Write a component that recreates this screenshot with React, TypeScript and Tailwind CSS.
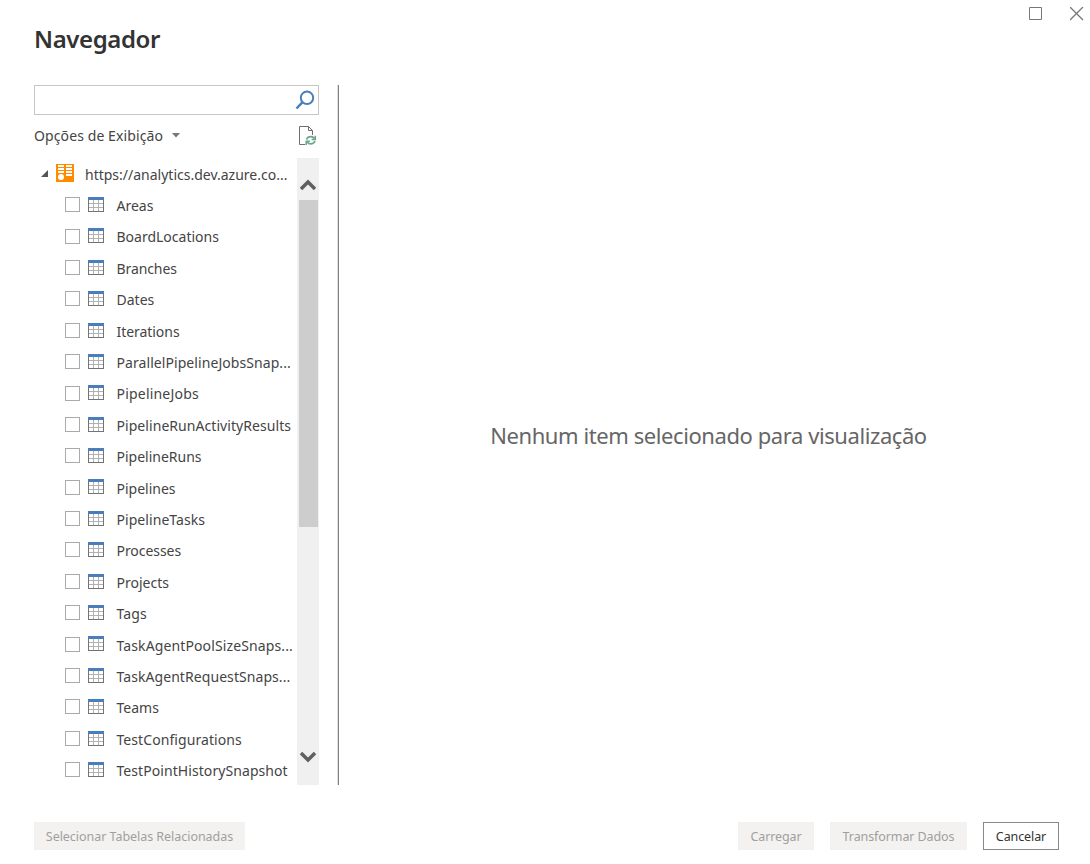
import React from "react";

const tables: { name: string; track: string }[] = [
  { name: "Areas", track: "tracking-[0px]" },
  { name: "BoardLocations", track: "tracking-[0px]" },
  { name: "Branches", track: "tracking-[-0.1px]" },
  { name: "Dates", track: "tracking-[0px]" },
  { name: "Iterations", track: "tracking-[-0.05px]" },
  { name: "ParallelPipelineJobsSnap...", track: "tracking-[0.07px]" },
  { name: "PipelineJobs", track: "tracking-[0.2px]" },
  { name: "PipelineRunActivityResults", track: "tracking-[0.06px]" },
  { name: "PipelineRuns", track: "tracking-[0px]" },
  { name: "Pipelines", track: "tracking-[0px]" },
  { name: "PipelineTasks", track: "tracking-[0.06px]" },
  { name: "Processes", track: "tracking-[-0.05px]" },
  { name: "Projects", track: "tracking-[0px]" },
  { name: "Tags", track: "tracking-[0.1px]" },
  { name: "TaskAgentPoolSizeSnaps...", track: "tracking-[0.12px]" },
  { name: "TaskAgentRequestSnaps...", track: "tracking-[0.07px]" },
  { name: "Teams", track: "tracking-[0px]" },
  { name: "TestConfigurations", track: "tracking-[0.07px]" },
  { name: "TestPointHistorySnapshot", track: "tracking-[0.07px]" },
];

function TableIcon() {
  return (
    <svg className="mb-[0.5px] ml-2 block shrink-0" width="16" height="15" viewBox="0 0 16 15" shapeRendering="crispEdges">
      <path d="M1 3h14v11H1z" fill="#fff" />
      <path d="M5 3h1v11H5zM10 3h1v11h-1zM1 6h14v1H1zM1 10h14v1H1z" fill="#b1b1b1" />
      <path d="M0 3h1v12H0zM15 3h1v12h-1zM0 14h16v1H0z" fill="#737373" />
      <path d="M0 0h16v3H0z" fill="#4a7ebb" />
    </svg>
  );
}

function SearchIcon() {
  return (
    <svg className="block" width="20" height="20" viewBox="0 0 20 20" fill="none" stroke="#4a7ebb" strokeWidth="2">
      <circle cx="12" cy="7.800" r="6.200" />
      <path d="M7.600 12.200L1.500 18.500" strokeWidth="2.500" />
    </svg>
  );
}

function RefreshPageIcon() {
  return (
    <svg className="block" width="18" height="20" viewBox="0 0 18 20" fill="none">
      <path d="M6 18.5H.5V.5h9l4 4V9M9.500.500v4h4" stroke="#6e6e6e" />
      <path d="M7.500 13.500c.8-2 2.400-2.900 4.300-2.900 1.500 0 2.700.6 3.700 1.900M16 15c-.8 2-2.400 2.900-4.300 2.900-1.500 0-2.700-.6-3.700-1.900" stroke="#69a68a" strokeWidth="1.700" />
      <path d="M16.300 9.800v3.700h-3.700M7.200 19v-3.800h3.700" stroke="#69a68a" strokeWidth="1.500" />
    </svg>
  );
}

export default function App() {
  return (
    <div className="flex h-[864px] w-[1090px] flex-col overflow-hidden bg-white font-['Noto_Sans','Open_Sans',sans-serif] text-[#444]">
      <header className="flex h-[85px] shrink-0 justify-between pl-[34px]">
        <h1 className="mt-[22px] text-[24px] leading-[34px] font-semibold tracking-[-0.4px] text-[#333]">Navegador</h1>
        <div className="mt-[7px] mr-[6px] flex h-[14px] gap-[27px]">
          <svg width="14" height="14" viewBox="0 0 14 14" fill="none" stroke="#777">
            <path d="M.5.5h12v12H.5z" />
          </svg>
          <svg width="14" height="14" viewBox="0 0 14 14" fill="none" stroke="#777" strokeWidth="1.300">
            <path d="M0 0l13 13M13 0l-13 13" />
          </svg>
        </div>
      </header>

      <main className="flex h-[700px] shrink-0 pl-[34px]">
        <aside className="flex w-[285px] shrink-0 flex-col">
          <div className="flex h-[30px] shrink-0 items-center justify-end border border-[#c6c6c6] pr-[3px]">
            <SearchIcon />
          </div>
          <div className="flex h-[43px] shrink-0 items-start justify-between pr-[2px]">
            <div className="flex items-center pt-[11px]">
              <span className="text-[14px] leading-5 tracking-[0.1px]">Opções de Exibição</span>
              <svg className="mb-px ml-[9px]" width="8" height="5" viewBox="0 0 8 5">
                <path d="M0 0h8L4 4.500z" fill="#777" />
              </svg>
            </div>
            <div className="mt-[11px]">
              <RefreshPageIcon />
            </div>
          </div>

          <div className="flex h-[627px] shrink-0">
            <div className="w-[263px] shrink-0 whitespace-nowrap">
              <div className="flex h-[31px] items-start pl-[7px]">
                <svg className="mt-[12px]" width="7" height="7" viewBox="0 0 7 7">
                  <path d="M7 0v7H0z" fill="#555" />
                </svg>
                <svg className="mt-[6px] ml-2" width="18" height="18" viewBox="0 0 18 18">
                  <path d="M0 0h18v18H0z" fill="#ff8c00" />
                  <path d="M2 1h6v2H2zM2 4h6v2H2zM2 7h6v2H2zM10 1h6v2h-6zM10 4h6v2h-6zM10 7h6v2h-6zM10 10h6v2h-6z" fill="#fff" />
                  <circle cx="5" cy="13" r="3" fill="#fff" />
                </svg>
                <span className="mt-[7px] ml-[11px] text-[14px] leading-5">https://analytics.dev.azure.co...</span>
              </div>
              {tables.map((table) => (
                <div key={table.name} className="flex h-[31.4px] items-center pl-[31px]">
                  <span className="size-[15px] shrink-0 border border-[#aaa] bg-white" />
                  <TableIcon />
                  <span className={"ml-[12.500px] pt-[2.800px] text-[14px] leading-5 " + table.track}>{table.name}</span>
                </div>
              ))}
            </div>
            <div className="flex w-[22px] shrink-0 flex-col items-center bg-[#f0f0f0]">
              <svg className="mt-[20px] shrink-0" width="16" height="13" viewBox="0 0 16 13" fill="none" stroke="#606060" strokeWidth="3.500">
                <path d="M1 11l7-7 7 7" />
              </svg>
              <div className="mt-[9px] h-[327px] w-[19px] shrink-0 bg-[#cdcdcd]" />
              <svg className="mt-[223px] shrink-0" width="16" height="13" viewBox="0 0 16 13" fill="none" stroke="#606060" strokeWidth="3.500">
                <path d="M1 3l7 7 7-7" />
              </svg>
            </div>
          </div>
        </aside>
        <div className="ml-[18px] w-[2px] border-r border-[#808080] bg-[#e0e0e0]" />
        <section className="flex w-[739px] items-center justify-center">
          <p className="text-[22px] leading-8 tracking-[-0.42px] text-[#666]">Nenhum item selecionado para visualização</p>
        </section>
      </main>

      <footer className="mt-[37px] flex h-7 shrink-0 pr-[31px] pl-[34px] text-[12.5px] text-[#a19f9d]">
        <button className="w-[211px] bg-[#f3f2f1] pt-[2px] tracking-[-0.04px]">Selecionar Tabelas Relacionadas</button>
        <button className="ml-auto w-[76px] bg-[#f3f2f1] pt-[2px] tracking-[-0.1px]">Carregar</button>
        <button className="ml-4 w-[137px] bg-[#f3f2f1] pt-[2px] tracking-[-0.1px]">Transformar Dados</button>
        <button className="ml-4 w-[76px] border border-[#8a8886] bg-white pt-[2px] tracking-[-0.1px] text-[#333]">Cancelar</button>
      </footer>
    </div>
  );
}
